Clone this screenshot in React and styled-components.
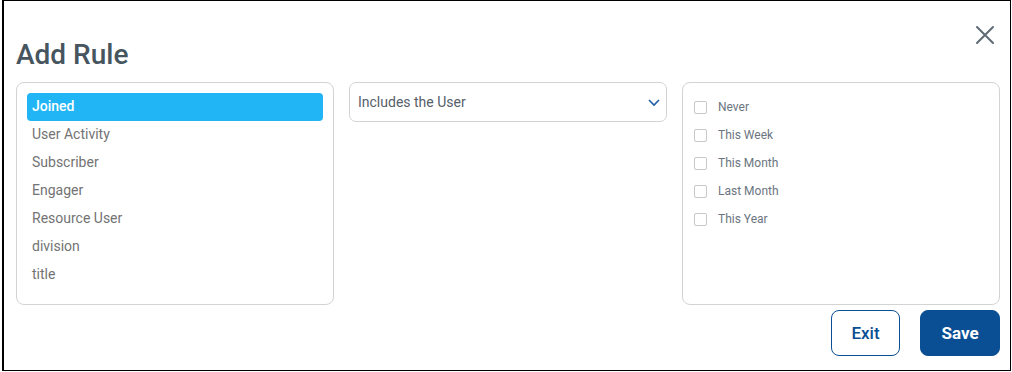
import React from 'react';
import styled, { createGlobalStyle } from 'styled-components';

const Global = createGlobalStyle`
  body {
    margin: 0;
    font-family: Roboto, "Liberation Sans", sans-serif;
    background: #fff;
  }
`;

const Frame = styled.div`
  box-sizing: border-box;
  margin-left: 2px;
  width: 1009px;
  height: 371px;
  border: 1px solid #000;
  border-left-width: 2px;
  padding: 0 10px 0 12px;
  display: flex;
  flex-direction: column;
`;

const Header = styled.div`
  display: flex;
  justify-content: space-between;
  align-items: flex-start;
  height: 81px;
`;

const Title = styled.h1`
  margin: 37px 0 0 0;
  font-size: 28px;
  line-height: 33px;
  font-weight: 500;
  color: #47555f;
`;

const Close = styled.button`
  border: none;
  background: none;
  padding: 0;
  margin: 23px 4px 0 0;
  width: 22px;
  height: 22px;
  cursor: pointer;
`;

const Columns = styled.div`
  display: grid;
  grid-template-columns: 318px 318px 318px;
  gap: 15px;
`;

const Panel = styled.div`
  box-sizing: border-box;
  height: 223px;
  border: 1px solid #d3d3d3;
  border-radius: 8px;
  padding: 10px;
`;

const Item = styled.div`
  height: 28px;
  line-height: 27px;
  padding-left: 5px;
  font-size: 14px;
  border-radius: 4px;
  color: ${p => (p.$active ? '#fff' : '#737373')};
  background: ${p => (p.$active ? '#22b5f5' : 'transparent')};
  font-weight: ${p => (p.$active ? 500 : 400)};
`;

const Select = styled.div`
  box-sizing: border-box;
  height: 40px;
  border: 1px solid #d3d3d3;
  border-radius: 7px;
  padding: 0 5px 0 8px;
  display: flex;
  align-items: center;
  justify-content: space-between;
  font-size: 14px;
  color: #56606a;
`;

const Check = styled.label`
  display: flex;
  align-items: center;
  height: 28px;
  padding-left: 1px;
  font-size: 12px;
  color: #6b7580;
`;

const Box = styled.span`
  box-sizing: border-box;
  width: 13px;
  height: 13px;
  border: 1px solid #c8c8c8;
  border-radius: 2px;
  margin-right: 11px;
`;

const Footer = styled.div`
  display: flex;
  justify-content: flex-end;
  gap: 20px;
  margin-top: 5px;
`;

const Button = styled.button`
  box-sizing: border-box;
  height: 46px;
  width: ${p => (p.$primary ? '80px' : '69px')};
  border-radius: 8px;
  border: 1px solid #0a4f94;
  font-family: Roboto, "Liberation Sans", sans-serif;
  font-size: 17px;
  font-weight: ${p => (p.$primary ? 700 : 500)};
  background: ${p => (p.$primary ? '#0a4f94' : '#fff')};
  color: ${p => (p.$primary ? '#fff' : '#0a4f94')};
`;

const rules = ['Joined', 'User Activity', 'Subscriber', 'Engager', 'Resource User', 'division', 'title'];
const times = ['Never', 'This Week', 'This Month', 'Last Month', 'This Year'];

export default function App() {
  return (
    <>
      <Global />
      <Frame>
        <Header>
          <Title>Add Rule</Title>
          <Close aria-label="close">
            <svg width="22" height="22" viewBox="0 0 22 22">
              <path d="M3 3 L19 19 M19 3 L3 19" stroke="#5f6b75" strokeWidth="2" strokeLinecap="round" />
            </svg>
          </Close>
        </Header>
        <Columns>
          <Panel>
            {rules.map((r, i) => (
              <Item key={r} $active={i === 0}>{r}</Item>
            ))}
          </Panel>
          <div>
            <Select>
              <span>Includes the User</span>
              <svg width="14" height="14" viewBox="0 0 14 14">
                <path d="M2 5 L7 10 L12 5" fill="none" stroke="#1e5fa8" strokeWidth="1.6" />
              </svg>
            </Select>
          </div>
          <Panel>
            {times.map(t => (
              <Check key={t}>
                <Box />
                {t}
              </Check>
            ))}
          </Panel>
        </Columns>
        <Footer>
          <Button>Exit</Button>
          <Button $primary>Save</Button>
        </Footer>
      </Frame>
    </>
  );
}
